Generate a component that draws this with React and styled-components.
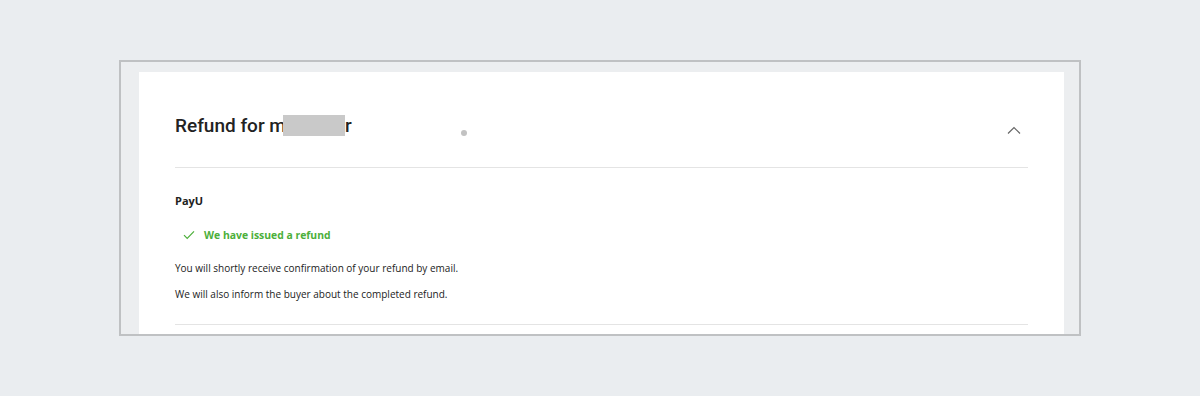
import React from "react";
import styled, { createGlobalStyle } from "styled-components";

const Global = createGlobalStyle`
  html, body { margin: 0; padding: 0; background: #eaedf0; }
  body { font-family: "Open Sans", "Liberation Sans", sans-serif; color: #222; }
`;

const Page = styled.div`
  width: 1200px;
  height: 396px;
  box-sizing: border-box;
  padding: 60px 0 0 119px;
  background: #eaedf0;
`;

const Frame = styled.div`
  width: 962px;
  height: 276px;
  box-sizing: border-box;
  border: 2px solid #bfc1c3;
  background: #eceef0;
  padding: 10px 15px 0 18px;
  overflow: hidden;
`;

const Card = styled.section`
  position: relative;
  background: #fff;
  height: 100%;
  padding: 0 36px;
`;

const Header = styled.div`
  display: flex;
  align-items: center;
  justify-content: space-between;
  padding: 40px 0 27px;
  border-bottom: 1px solid #e4e4e4;
`;

const Title = styled.h2`
  margin: 0;
  font-family: Roboto, "Liberation Sans", sans-serif;
  font-size: 19px;
  line-height: 28px;
  font-weight: 500;
  color: #222;
`;

const Blur = styled.span`
  display: inline-block;
  width: 62px;
  height: 21px;
  margin-left: -3px;
  background: #c9c9c9;
  vertical-align: -4px;
`;

const Dot = styled.span`
  position: absolute;
  left: 322px;
  top: 58px;
  width: 6px;
  height: 6px;
  border-radius: 50%;
  background: #c2c2c2;
`;

const Toggle = styled.button`
  border: 0;
  background: none;
  padding: 0;
  margin: 8px 7px 0 0;
  display: flex;
  cursor: pointer;
`;

const Body = styled.div`
  padding: 25px 0 22px;
  border-bottom: 1px solid #e4e4e4;
`;

const Provider = styled.div`
  font-size: 11px;
  line-height: 16px;
  font-weight: 700;
  color: #222;
`;

const Status = styled.div`
  display: flex;
  align-items: center;
  gap: 9px;
  margin: 18px 0 0 8px;
  font-size: 10.4px;
  line-height: 16px;
  font-weight: 700;
  color: #4caf3a;
`;

const Text = styled.p`
  margin: ${(p) => (p.$first ? "17px" : "10px")} 0 0;
  font-size: 10px;
  line-height: 16px;
  color: #222;
`;

export default function App() {
  return (
    <>
      <Global />
      <Page>
        <Frame>
          <Card>
            <Header>
              <Title>
                Refund for m<Blur />r
              </Title>
              <Toggle aria-label="collapse">
                <svg width="14" height="8" viewBox="0 0 14 8" fill="none">
                  <path d="M1 7.5 7 1.5l6 6" stroke="#666" strokeWidth="1.2" />
                </svg>
              </Toggle>
            </Header>
            <Dot />
            <Body>
              <Provider>PayU</Provider>
              <Status>
                <svg width="12" height="10" viewBox="0 0 12 10" fill="none">
                  <path d="M1 5.2 4.2 8.4 11 1.4" stroke="#4caf3a" strokeWidth="1.2" />
                </svg>
                We have issued a refund
              </Status>
              <Text $first>You will shortly receive confirmation of your refund by email.</Text>
              <Text>We will also inform the buyer about the completed refund.</Text>
            </Body>
          </Card>
        </Frame>
      </Page>
    </>
  );
}
